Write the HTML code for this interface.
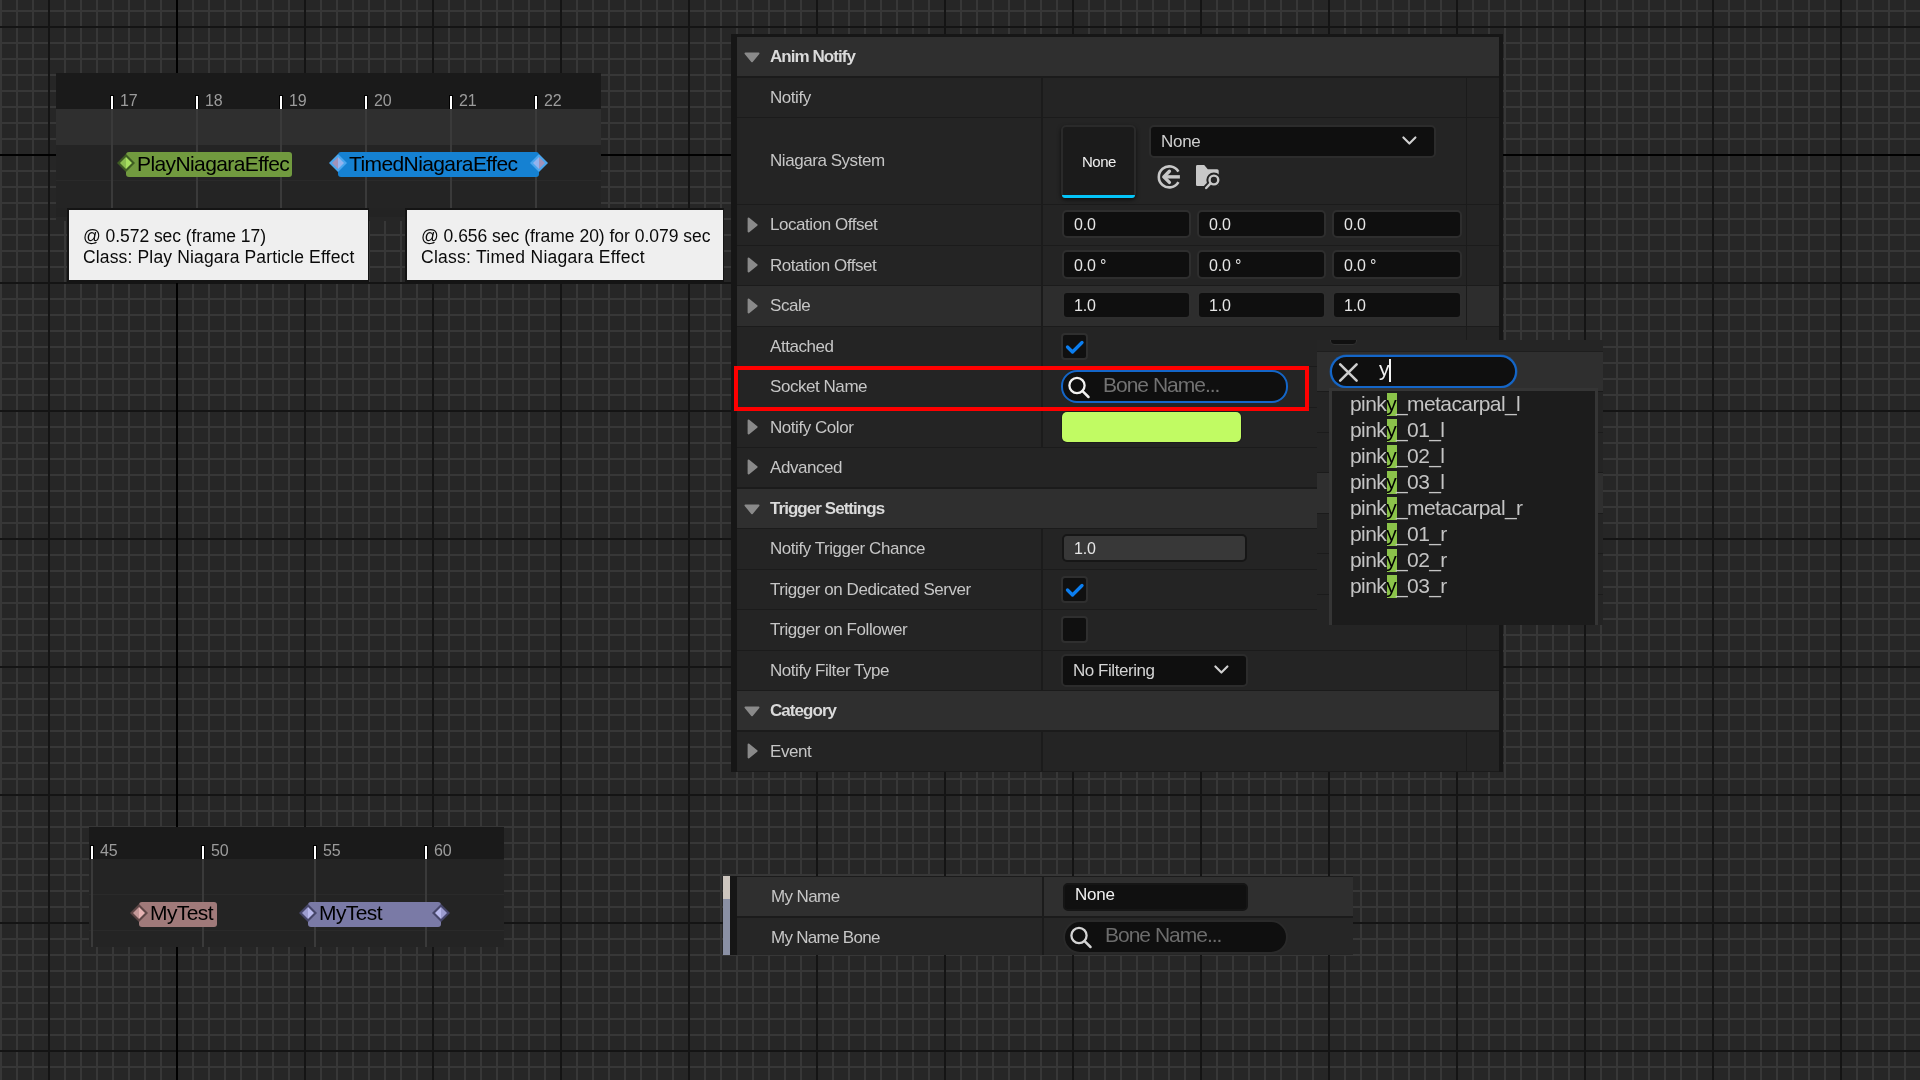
<!DOCTYPE html>
<html><head><meta charset="utf-8"><style>
html,body{margin:0;padding:0;width:1920px;height:1080px;overflow:hidden}
body{position:relative;font-family:"Liberation Sans", sans-serif;background-color:#262626;background-image:linear-gradient(to right, transparent 176px, #000 176px, #000 178px, transparent 178px),linear-gradient(to bottom, transparent 154px, #000 154px, #000 156px, transparent 156px),repeating-linear-gradient(to right, transparent 0, transparent 48px, #141414 48px, #141414 50px, transparent 50px, transparent 128px),repeating-linear-gradient(to bottom, transparent 0, transparent 26px, #141414 26px, #141414 28px, transparent 28px, transparent 128px),repeating-linear-gradient(to right, #373737 0, #373737 2px, transparent 2px, transparent 16px),repeating-linear-gradient(to bottom, transparent 0, transparent 10px, #373737 10px, #373737 12px, transparent 12px, transparent 16px);}
.b{position:absolute;box-sizing:content-box}
.t{position:absolute;white-space:nowrap;will-change:transform}
</style></head><body>
<div class="b" style="left:56px;top:73px;width:545px;height:36px;background:#1a1a1a"></div>
<div class="b" style="left:56px;top:109px;width:545px;height:36px;background:#2f2f2f"></div>
<div class="b" style="left:56px;top:145px;width:545px;height:63px;background:#242424"></div>
<div class="b" style="left:56px;top:180px;width:545px;height:1px;background:#2a2a2a"></div>
<div class="b" style="left:56px;top:208px;width:349px;height:9px;background:#232323"></div>
<div class="b" style="left:56px;top:217px;width:349px;height:4px;background:#262626"></div>
<div class="b" style="left:111px;top:109px;width:2px;height:99px;background:#3a3a3a"></div>
<div class="b" style="left:110px;top:95px;width:4px;height:14px;background:#000"></div>
<div class="b" style="left:111px;top:96px;width:2px;height:13px;background:#fff"></div>
<div class="t" style="left:120px;top:93.46px;font-size:16px;line-height:16px;color:#9c9c9c;font-weight:normal;letter-spacing:-0.2px;">17</div>
<div class="b" style="left:196px;top:109px;width:2px;height:99px;background:#3a3a3a"></div>
<div class="b" style="left:195px;top:95px;width:4px;height:14px;background:#000"></div>
<div class="b" style="left:196px;top:96px;width:2px;height:13px;background:#fff"></div>
<div class="t" style="left:205px;top:93.46px;font-size:16px;line-height:16px;color:#9c9c9c;font-weight:normal;letter-spacing:-0.2px;">18</div>
<div class="b" style="left:280px;top:109px;width:2px;height:99px;background:#3a3a3a"></div>
<div class="b" style="left:279px;top:95px;width:4px;height:14px;background:#000"></div>
<div class="b" style="left:280px;top:96px;width:2px;height:13px;background:#fff"></div>
<div class="t" style="left:289px;top:93.46px;font-size:16px;line-height:16px;color:#9c9c9c;font-weight:normal;letter-spacing:-0.2px;">19</div>
<div class="b" style="left:365px;top:109px;width:2px;height:99px;background:#3a3a3a"></div>
<div class="b" style="left:364px;top:95px;width:4px;height:14px;background:#000"></div>
<div class="b" style="left:365px;top:96px;width:2px;height:13px;background:#fff"></div>
<div class="t" style="left:374px;top:93.46px;font-size:16px;line-height:16px;color:#9c9c9c;font-weight:normal;letter-spacing:-0.2px;">20</div>
<div class="b" style="left:450px;top:109px;width:2px;height:99px;background:#3a3a3a"></div>
<div class="b" style="left:449px;top:95px;width:4px;height:14px;background:#000"></div>
<div class="b" style="left:450px;top:96px;width:2px;height:13px;background:#fff"></div>
<div class="t" style="left:459px;top:93.46px;font-size:16px;line-height:16px;color:#9c9c9c;font-weight:normal;letter-spacing:-0.2px;">21</div>
<div class="b" style="left:535px;top:109px;width:2px;height:99px;background:#3a3a3a"></div>
<div class="b" style="left:534px;top:95px;width:4px;height:14px;background:#000"></div>
<div class="b" style="left:535px;top:96px;width:2px;height:13px;background:#fff"></div>
<div class="t" style="left:544px;top:93.46px;font-size:16px;line-height:16px;color:#9c9c9c;font-weight:normal;letter-spacing:-0.2px;">22</div>
<div class="b" style="left:126px;top:152px;width:166px;height:25px;background:#719a3f;border-radius:3px;overflow:hidden"><div class="t" style="left:10.5px;top:-1.5px;font-size:21px;line-height:25px;color:#000;letter-spacing:-0.6px">PlayNiagaraEffec</div></div>
<svg class="b" style="left:116px;top:153px" width="20" height="20" viewBox="-10 -10 20 20"><path d="M0,-9L9,0L0,9L-9,0Z" fill="#3e5c22"/><path d="M0,-6L0,6L-6,0Z" fill="#8bbd50"/><path d="M0,-6L6,0L0,6Z" fill="#a6df60"/></svg>
<div class="b" style="left:338px;top:152px;width:201px;height:25px;background:#1581d2;border-radius:3px;overflow:hidden"><div class="b" style="left:0;top:0;width:181px;height:25px;overflow:hidden"><div class="t" style="left:10.5px;top:-1.5px;font-size:21px;line-height:25px;color:#000;letter-spacing:-0.6px">TimedNiagaraEffec</div></div></div>
<svg class="b" style="left:328px;top:153px" width="20" height="20" viewBox="-10 -10 20 20"><path d="M0,-9L9,0L0,9L-9,0Z" fill="#4aa6ee"/><path d="M0,-6L0,6L-6,0Z" fill="#a093ba"/><path d="M0,-6L6,0L0,6Z" fill="#93b3ee"/></svg>
<svg class="b" style="left:529px;top:153px" width="20" height="20" viewBox="-10 -10 20 20"><path d="M0,-9L9,0L0,9L-9,0Z" fill="#4aa6ee"/><path d="M0,-6L0,6L-6,0Z" fill="#93b3ee"/><path d="M0,-6L6,0L0,6Z" fill="#a093ba"/></svg>
<div class="b" style="left:67px;top:208px;width:302px;height:75px;background:#141414"></div>
<div class="b" style="left:69px;top:210px;width:299px;height:70px;background:#efefef"></div>
<div class="t" style="left:83px;top:228.19px;font-size:17.5px;line-height:17.5px;color:#0a0a0a;font-weight:normal;letter-spacing:-0.05px;">@ 0.572 sec (frame 17)</div>
<div class="t" style="left:83px;top:249.19px;font-size:17.5px;line-height:17.5px;color:#0a0a0a;font-weight:normal;letter-spacing:0.15px;">Class: Play Niagara Particle Effect</div>
<div class="b" style="left:405px;top:208px;width:319px;height:75px;background:#141414"></div>
<div class="b" style="left:407px;top:210px;width:316px;height:70px;background:#efefef"></div>
<div class="t" style="left:421px;top:228.19px;font-size:17.5px;line-height:17.5px;color:#0a0a0a;font-weight:normal;letter-spacing:-0.02px;">@ 0.656 sec (frame 20) for 0.079 sec</div>
<div class="t" style="left:421px;top:249.19px;font-size:17.5px;line-height:17.5px;color:#0a0a0a;font-weight:normal;letter-spacing:0.27px;">Class: Timed Niagara Effect</div>
<div class="b" style="left:89px;top:827px;width:415px;height:32px;background:#1a1a1a"></div>
<div class="b" style="left:89px;top:859px;width:415px;height:88px;background:#242424"></div>
<div class="b" style="left:89px;top:894px;width:415px;height:1px;background:#2a2a2a"></div>
<div class="b" style="left:89px;top:930px;width:415px;height:1px;background:#2a2a2a"></div>
<div class="b" style="left:91px;top:859px;width:2px;height:88px;background:#3a3a3a"></div>
<div class="b" style="left:90px;top:845px;width:4px;height:14px;background:#000"></div>
<div class="b" style="left:91px;top:846px;width:2px;height:13px;background:#fff"></div>
<div class="t" style="left:100px;top:843.46px;font-size:16px;line-height:16px;color:#9c9c9c;font-weight:normal;letter-spacing:-0.2px;">45</div>
<div class="b" style="left:202px;top:859px;width:2px;height:88px;background:#3a3a3a"></div>
<div class="b" style="left:201px;top:845px;width:4px;height:14px;background:#000"></div>
<div class="b" style="left:202px;top:846px;width:2px;height:13px;background:#fff"></div>
<div class="t" style="left:211px;top:843.46px;font-size:16px;line-height:16px;color:#9c9c9c;font-weight:normal;letter-spacing:-0.2px;">50</div>
<div class="b" style="left:314px;top:859px;width:2px;height:88px;background:#3a3a3a"></div>
<div class="b" style="left:313px;top:845px;width:4px;height:14px;background:#000"></div>
<div class="b" style="left:314px;top:846px;width:2px;height:13px;background:#fff"></div>
<div class="t" style="left:323px;top:843.46px;font-size:16px;line-height:16px;color:#9c9c9c;font-weight:normal;letter-spacing:-0.2px;">55</div>
<div class="b" style="left:425px;top:859px;width:2px;height:88px;background:#3a3a3a"></div>
<div class="b" style="left:424px;top:845px;width:4px;height:14px;background:#000"></div>
<div class="b" style="left:425px;top:846px;width:2px;height:13px;background:#fff"></div>
<div class="t" style="left:434px;top:843.46px;font-size:16px;line-height:16px;color:#9c9c9c;font-weight:normal;letter-spacing:-0.2px;">60</div>
<div class="b" style="left:139px;top:902px;width:78px;height:25px;background:#a07a7a;border-radius:3px;overflow:hidden"><div class="t" style="left:10.5px;top:-2.5px;font-size:21px;line-height:25px;color:#000;letter-spacing:-0.6px">MyTest</div></div>
<svg class="b" style="left:129px;top:903px" width="20" height="20" viewBox="-10 -10 20 20"><path d="M0,-9L9,0L0,9L-9,0Z" fill="#5e4646"/><path d="M0,-6L0,6L-6,0Z" fill="#c49898"/><path d="M0,-6L6,0L0,6Z" fill="#e6b4b4"/></svg>
<div class="b" style="left:308px;top:902px;width:133px;height:25px;background:#7a7aa6;border-radius:3px;overflow:hidden"><div class="t" style="left:10.5px;top:-2.5px;font-size:21px;line-height:25px;color:#000;letter-spacing:-0.6px">MyTest</div></div>
<svg class="b" style="left:298px;top:903px" width="20" height="20" viewBox="-10 -10 20 20"><path d="M0,-9L9,0L0,9L-9,0Z" fill="#46466a"/><path d="M0,-6L0,6L-6,0Z" fill="#9c9cd0"/><path d="M0,-6L6,0L0,6Z" fill="#b8b8ec"/></svg>
<svg class="b" style="left:431px;top:903px" width="20" height="20" viewBox="-10 -10 20 20"><path d="M0,-9L9,0L0,9L-9,0Z" fill="#46466a"/><path d="M0,-6L0,6L-6,0Z" fill="#b8b8ec"/><path d="M0,-6L6,0L0,6Z" fill="#9c9cd0"/></svg>
<div class="b" style="left:731px;top:34px;width:772px;height:738px;background:#1b1b1b"></div>
<div class="b" style="left:731px;top:34px;width:6px;height:738px;background:#161616"></div>
<div class="b" style="left:1499px;top:34px;width:4px;height:738px;background:#161616"></div>
<div class="b" style="left:731px;top:34px;width:772px;height:3px;background:#161616"></div>
<div class="b" style="left:737px;top:37px;width:762px;height:39px;background:#2f2f2f"></div>
<svg class="b" style="left:744px;top:52px" width="16" height="11"><path d="M1.4,1.4L14.6,1.4L8,9.4Z" fill="#8a8a8a" stroke="#8a8a8a" stroke-width="1.8" stroke-linejoin="round"/></svg>
<div class="t" style="left:770px;top:47.61px;font-size:17px;line-height:17px;color:#dadada;font-weight:bold;letter-spacing:-0.95px;">Anim Notify</div>
<div class="b" style="left:737px;top:78px;width:304px;height:39px;background:#242424"></div>
<div class="b" style="left:1043px;top:78px;width:423px;height:39px;background:#242424"></div>
<div class="b" style="left:1467px;top:78px;width:32px;height:39px;background:#242424"></div>
<div class="t" style="left:770px;top:88.61px;font-size:17px;line-height:17px;color:#c6c6c6;font-weight:normal;letter-spacing:-0.45px;">Notify</div>
<div class="b" style="left:737px;top:118px;width:304px;height:86px;background:#242424"></div>
<div class="b" style="left:1043px;top:118px;width:423px;height:86px;background:#242424"></div>
<div class="b" style="left:1467px;top:118px;width:32px;height:86px;background:#242424"></div>
<div class="t" style="left:770px;top:152.11px;font-size:17px;line-height:17px;color:#c6c6c6;font-weight:normal;letter-spacing:-0.45px;">Niagara System</div>
<div class="b" style="left:737px;top:205px;width:304px;height:40px;background:#242424"></div>
<div class="b" style="left:1043px;top:205px;width:423px;height:40px;background:#242424"></div>
<div class="b" style="left:1467px;top:205px;width:32px;height:40px;background:#242424"></div>
<svg class="b" style="left:747px;top:217px" width="11" height="16"><path d="M1.6,1.6L9.6,8L1.6,14.4Z" fill="#8a8a8a" stroke="#8a8a8a" stroke-width="2" stroke-linejoin="round"/></svg>
<div class="t" style="left:770px;top:216.11px;font-size:17px;line-height:17px;color:#c6c6c6;font-weight:normal;letter-spacing:-0.45px;">Location Offset</div>
<div class="b" style="left:737px;top:246px;width:304px;height:39px;background:#242424"></div>
<div class="b" style="left:1043px;top:246px;width:423px;height:39px;background:#242424"></div>
<div class="b" style="left:1467px;top:246px;width:32px;height:39px;background:#242424"></div>
<svg class="b" style="left:747px;top:257px" width="11" height="16"><path d="M1.6,1.6L9.6,8L1.6,14.4Z" fill="#8a8a8a" stroke="#8a8a8a" stroke-width="2" stroke-linejoin="round"/></svg>
<div class="t" style="left:770px;top:256.61px;font-size:17px;line-height:17px;color:#c6c6c6;font-weight:normal;letter-spacing:-0.45px;">Rotation Offset</div>
<div class="b" style="left:737px;top:286px;width:304px;height:40px;background:#2d2d2d"></div>
<div class="b" style="left:1043px;top:286px;width:423px;height:40px;background:#2d2d2d"></div>
<div class="b" style="left:1467px;top:286px;width:32px;height:40px;background:#2d2d2d"></div>
<svg class="b" style="left:747px;top:298px" width="11" height="16"><path d="M1.6,1.6L9.6,8L1.6,14.4Z" fill="#8a8a8a" stroke="#8a8a8a" stroke-width="2" stroke-linejoin="round"/></svg>
<div class="t" style="left:770px;top:297.11px;font-size:17px;line-height:17px;color:#c6c6c6;font-weight:normal;letter-spacing:-0.45px;">Scale</div>
<div class="b" style="left:737px;top:327px;width:304px;height:39px;background:#242424"></div>
<div class="b" style="left:1043px;top:327px;width:423px;height:39px;background:#242424"></div>
<div class="b" style="left:1467px;top:327px;width:32px;height:39px;background:#242424"></div>
<div class="t" style="left:770px;top:337.61px;font-size:17px;line-height:17px;color:#c6c6c6;font-weight:normal;letter-spacing:-0.45px;">Attached</div>
<div class="b" style="left:737px;top:367px;width:304px;height:40px;background:#242424"></div>
<div class="b" style="left:1043px;top:367px;width:423px;height:40px;background:#242424"></div>
<div class="b" style="left:1467px;top:367px;width:32px;height:40px;background:#242424"></div>
<div class="t" style="left:770px;top:378.11px;font-size:17px;line-height:17px;color:#c6c6c6;font-weight:normal;letter-spacing:-0.45px;">Socket Name</div>
<div class="b" style="left:737px;top:408px;width:304px;height:39px;background:#242424"></div>
<div class="b" style="left:1043px;top:408px;width:423px;height:39px;background:#242424"></div>
<div class="b" style="left:1467px;top:408px;width:32px;height:39px;background:#242424"></div>
<svg class="b" style="left:747px;top:419px" width="11" height="16"><path d="M1.6,1.6L9.6,8L1.6,14.4Z" fill="#8a8a8a" stroke="#8a8a8a" stroke-width="2" stroke-linejoin="round"/></svg>
<div class="t" style="left:770px;top:418.61px;font-size:17px;line-height:17px;color:#c6c6c6;font-weight:normal;letter-spacing:-0.45px;">Notify Color</div>
<div class="b" style="left:737px;top:448px;width:762px;height:39px;background:#242424"></div>
<svg class="b" style="left:747px;top:459px" width="11" height="16"><path d="M1.6,1.6L9.6,8L1.6,14.4Z" fill="#8a8a8a" stroke="#8a8a8a" stroke-width="2" stroke-linejoin="round"/></svg>
<div class="t" style="left:770px;top:458.61px;font-size:17px;line-height:17px;color:#c6c6c6;font-weight:normal;letter-spacing:-0.45px;">Advanced</div>
<div class="b" style="left:737px;top:489px;width:762px;height:39px;background:#2f2f2f"></div>
<svg class="b" style="left:744px;top:504px" width="16" height="11"><path d="M1.4,1.4L14.6,1.4L8,9.4Z" fill="#8a8a8a" stroke="#8a8a8a" stroke-width="1.8" stroke-linejoin="round"/></svg>
<div class="t" style="left:770px;top:499.61px;font-size:17px;line-height:17px;color:#dadada;font-weight:bold;letter-spacing:-0.95px;">Trigger Settings</div>
<div class="b" style="left:737px;top:529px;width:304px;height:40px;background:#242424"></div>
<div class="b" style="left:1043px;top:529px;width:423px;height:40px;background:#242424"></div>
<div class="b" style="left:1467px;top:529px;width:32px;height:40px;background:#242424"></div>
<div class="t" style="left:770px;top:540.11px;font-size:17px;line-height:17px;color:#c6c6c6;font-weight:normal;letter-spacing:-0.45px;">Notify Trigger Chance</div>
<div class="b" style="left:737px;top:570px;width:304px;height:39px;background:#242424"></div>
<div class="b" style="left:1043px;top:570px;width:423px;height:39px;background:#242424"></div>
<div class="b" style="left:1467px;top:570px;width:32px;height:39px;background:#242424"></div>
<div class="t" style="left:770px;top:580.61px;font-size:17px;line-height:17px;color:#c6c6c6;font-weight:normal;letter-spacing:-0.45px;">Trigger on Dedicated Server</div>
<div class="b" style="left:737px;top:610px;width:304px;height:40px;background:#242424"></div>
<div class="b" style="left:1043px;top:610px;width:423px;height:40px;background:#242424"></div>
<div class="b" style="left:1467px;top:610px;width:32px;height:40px;background:#242424"></div>
<div class="t" style="left:770px;top:621.11px;font-size:17px;line-height:17px;color:#c6c6c6;font-weight:normal;letter-spacing:-0.45px;">Trigger on Follower</div>
<div class="b" style="left:737px;top:651px;width:304px;height:39px;background:#242424"></div>
<div class="b" style="left:1043px;top:651px;width:423px;height:39px;background:#242424"></div>
<div class="b" style="left:1467px;top:651px;width:32px;height:39px;background:#242424"></div>
<div class="t" style="left:770px;top:661.61px;font-size:17px;line-height:17px;color:#c6c6c6;font-weight:normal;letter-spacing:-0.45px;">Notify Filter Type</div>
<div class="b" style="left:737px;top:691px;width:762px;height:39px;background:#2f2f2f"></div>
<svg class="b" style="left:744px;top:706px" width="16" height="11"><path d="M1.4,1.4L14.6,1.4L8,9.4Z" fill="#8a8a8a" stroke="#8a8a8a" stroke-width="1.8" stroke-linejoin="round"/></svg>
<div class="t" style="left:770px;top:701.61px;font-size:17px;line-height:17px;color:#dadada;font-weight:bold;letter-spacing:-0.95px;">Category</div>
<div class="b" style="left:737px;top:732px;width:304px;height:39px;background:#242424"></div>
<div class="b" style="left:1043px;top:732px;width:423px;height:39px;background:#242424"></div>
<div class="b" style="left:1467px;top:732px;width:32px;height:39px;background:#242424"></div>
<svg class="b" style="left:747px;top:743px" width="11" height="16"><path d="M1.6,1.6L9.6,8L1.6,14.4Z" fill="#8a8a8a" stroke="#8a8a8a" stroke-width="2" stroke-linejoin="round"/></svg>
<div class="t" style="left:770px;top:742.61px;font-size:17px;line-height:17px;color:#c6c6c6;font-weight:normal;letter-spacing:-0.45px;">Event</div>
<div class="b" style="left:1061px;top:125px;width:71px;height:69px;background:#1b1b1b;border:2px solid #2a2a2a;border-radius:5px;box-shadow:0 2px 4px rgba(0,0,0,0.6)"></div>
<div class="b" style="left:1062px;top:195px;width:73px;height:3px;background:#04c4f8;border-radius:0 0 3px 3px"></div>
<div class="t" style="left:1082px;top:154.30px;font-size:15px;line-height:15px;color:#f0f0f0;font-weight:normal;letter-spacing:-0.5px;">None</div>
<div class="b" style="left:1149px;top:125px;width:283px;height:29px;background:#0f0f0f;border:2px solid #2c2c2c;border-radius:5px"></div>
<div class="t" style="left:1161px;top:132.61px;font-size:17px;line-height:17px;color:#cfcfcf;font-weight:normal;letter-spacing:-0.3px;">None</div>
<svg class="b" style="left:1402px;top:136px" width="16" height="10" viewBox="0 0 16 10"><path d="M1.4,1.4 L7.4,7.6 L13.4,1.4" fill="none" stroke="#d0d0d0" stroke-width="2.1" stroke-linecap="round" stroke-linejoin="round"/></svg>
<svg class="b" style="left:1155px;top:163px" width="28" height="28" viewBox="0 0 28 28"><path d="M23.4,8.65 A10.5,10.5 0 1 0 23.4,19.15" fill="none" stroke="#c8c8c8" stroke-width="2.6"/><path d="M8.8,13.85 L24.9,13.85" fill="none" stroke="#c8c8c8" stroke-width="3.4"/><path d="M14.4,8.3 L8.8,13.85 L14.4,19.4" fill="none" stroke="#c8c8c8" stroke-width="3.4" stroke-linejoin="round" stroke-linecap="round"/></svg>
<svg class="b" style="left:1194px;top:163px" width="30" height="28" viewBox="0 0 30 28"><path d="M2,3.4 Q2,2 3.4,2 L10.2,2 L13.8,6.3 L23.2,6.3 Q24.7,6.3 24.7,7.8 L24.7,23.1 L3.4,23.1 Q2,23.1 2,21.7 Z" fill="#c8c8c8"/><circle cx="19.9" cy="17" r="4.35" fill="#242424" stroke="#242424" stroke-width="6.4"/><path d="M15.4,21.5 L11.8,25.3" stroke="#242424" stroke-width="6"/><circle cx="19.9" cy="17" r="4.35" fill="none" stroke="#c8c8c8" stroke-width="2.4"/><path d="M16.3,20.6 L12.2,25" stroke="#c8c8c8" stroke-width="2.4" stroke-linecap="round"/></svg>
<div class="b" style="left:1062px;top:210px;width:125px;height:24px;background:#0f0f0f;border:2px solid #2e2e2e;border-radius:5px"></div>
<div class="t" style="left:1074px;top:217.26px;font-size:16px;line-height:16px;color:#e6e6e6;font-weight:normal;letter-spacing:-0.2px;">0.0</div>
<div class="b" style="left:1197px;top:210px;width:125px;height:24px;background:#0f0f0f;border:2px solid #2e2e2e;border-radius:5px"></div>
<div class="t" style="left:1209px;top:217.26px;font-size:16px;line-height:16px;color:#e6e6e6;font-weight:normal;letter-spacing:-0.2px;">0.0</div>
<div class="b" style="left:1332px;top:210px;width:126px;height:24px;background:#0f0f0f;border:2px solid #2e2e2e;border-radius:5px"></div>
<div class="t" style="left:1344px;top:217.26px;font-size:16px;line-height:16px;color:#e6e6e6;font-weight:normal;letter-spacing:-0.2px;">0.0</div>
<div class="b" style="left:1062px;top:250px;width:125px;height:25px;background:#0f0f0f;border:2px solid #2e2e2e;border-radius:5px"></div>
<div class="t" style="left:1074px;top:257.76px;font-size:16px;line-height:16px;color:#e6e6e6;font-weight:normal;letter-spacing:-0.2px;">0.0 °</div>
<div class="b" style="left:1197px;top:250px;width:125px;height:25px;background:#0f0f0f;border:2px solid #2e2e2e;border-radius:5px"></div>
<div class="t" style="left:1209px;top:257.76px;font-size:16px;line-height:16px;color:#e6e6e6;font-weight:normal;letter-spacing:-0.2px;">0.0 °</div>
<div class="b" style="left:1332px;top:250px;width:126px;height:25px;background:#0f0f0f;border:2px solid #2e2e2e;border-radius:5px"></div>
<div class="t" style="left:1344px;top:257.76px;font-size:16px;line-height:16px;color:#e6e6e6;font-weight:normal;letter-spacing:-0.2px;">0.0 °</div>
<div class="b" style="left:1062px;top:291px;width:125px;height:24px;background:#0f0f0f;border:2px solid #2e2e2e;border-radius:5px"></div>
<div class="t" style="left:1074px;top:298.26px;font-size:16px;line-height:16px;color:#e6e6e6;font-weight:normal;letter-spacing:-0.2px;">1.0</div>
<div class="b" style="left:1197px;top:291px;width:125px;height:24px;background:#0f0f0f;border:2px solid #2e2e2e;border-radius:5px"></div>
<div class="t" style="left:1209px;top:298.26px;font-size:16px;line-height:16px;color:#e6e6e6;font-weight:normal;letter-spacing:-0.2px;">1.0</div>
<div class="b" style="left:1332px;top:291px;width:126px;height:24px;background:#0f0f0f;border:2px solid #2e2e2e;border-radius:5px"></div>
<div class="t" style="left:1344px;top:298.26px;font-size:16px;line-height:16px;color:#e6e6e6;font-weight:normal;letter-spacing:-0.2px;">1.0</div>
<div class="b" style="left:1061px;top:333px;width:23px;height:23px;background:#101010;border:2px solid #2f2f2f;border-radius:4px"></div>
<svg class="b" style="left:1062px;top:334px" width="25" height="25" viewBox="0 0 25 25"><path d="M5.5,13 L10.5,18 L20,8.5" fill="none" stroke="#0b7ef0" stroke-width="3.3" stroke-linecap="round" stroke-linejoin="round"/></svg>
<div class="b" style="left:1317px;top:340px;width:286px;height:12px;background:#252525;overflow:hidden"><div class="b" style="left:13px;top:-21px;width:25px;height:24px;background:#101010;border:1px solid #313131;border-radius:4px"></div></div>
<div class="b" style="left:1061px;top:370px;width:223px;height:29px;background:#0f0f0f;border:2px solid #1466c8;border-radius:16px"></div>
<svg class="b" style="left:1066px;top:373.5px" width="28" height="28" viewBox="0 0 28 28"><circle cx="11" cy="11.5" r="7.6" fill="none" stroke="#f2f2f2" stroke-width="2.3"/><path d="M16.6,17.2 L22.5,23" stroke="#f2f2f2" stroke-width="2.5" stroke-linecap="round"/></svg>
<div class="t" style="left:1103px;top:373.92px;font-size:21px;line-height:21px;color:#727272;font-weight:normal;letter-spacing:-1.0px;">Bone Name...</div>
<div class="b" style="left:1062px;top:412px;width:179px;height:30px;background:#c1fb63;border-radius:5px;box-shadow:0 0 0 1px #1c1c1c"></div>
<div class="b" style="left:1062px;top:534px;width:181px;height:24px;background:#383838;border:2px solid #161616;border-radius:5px"></div>
<div class="t" style="left:1074px;top:540.76px;font-size:16px;line-height:16px;color:#e6e6e6;font-weight:normal;letter-spacing:-0.2px;">1.0</div>
<div class="b" style="left:1061px;top:576px;width:23px;height:23px;background:#101010;border:2px solid #2f2f2f;border-radius:4px"></div>
<svg class="b" style="left:1062px;top:577px" width="25" height="25" viewBox="0 0 25 25"><path d="M5.5,13 L10.5,18 L20,8.5" fill="none" stroke="#0b7ef0" stroke-width="3.3" stroke-linecap="round" stroke-linejoin="round"/></svg>
<div class="b" style="left:1061px;top:616px;width:23px;height:23px;background:#101010;border:2px solid #2f2f2f;border-radius:4px"></div>
<div class="b" style="left:1061px;top:654px;width:183px;height:29px;background:#0f0f0f;border:2px solid #2c2c2c;border-radius:5px"></div>
<div class="t" style="left:1073px;top:661.61px;font-size:17px;line-height:17px;color:#d4d4d4;font-weight:normal;letter-spacing:-0.45px;">No Filtering</div>
<svg class="b" style="left:1214px;top:665px" width="16" height="10" viewBox="0 0 16 10"><path d="M1.4,1.4 L7.4,7.6 L13.4,1.4" fill="none" stroke="#d0d0d0" stroke-width="2.1" stroke-linecap="round" stroke-linejoin="round"/></svg>
<div class="b" style="left:734px;top:366px;width:567px;height:37px;border:4px solid #ff0000"></div>
<div class="b" style="left:1317px;top:351px;width:286px;height:1px;background:#1e1e1e"></div>
<div class="b" style="left:1317px;top:352px;width:286px;height:39px;background:#2f2f2f"></div>
<div class="b" style="left:1330px;top:355px;width:183px;height:29px;background:#0f0f0f;border:2px solid #1466c8;border-radius:17px;box-shadow:0 0 0 0.5px rgba(20,102,200,0.6)"></div>
<svg class="b" style="left:1336px;top:361px" width="24" height="24" viewBox="0 0 24 24"><path d="M4.2,3.3 L20.6,19.7 M20.6,3.3 L4.2,19.7" stroke="#cdcdcd" stroke-width="2.6" stroke-linecap="round"/></svg>
<div class="t" style="left:1379px;top:358.22px;font-size:21px;line-height:21px;color:#f0f0f0;font-weight:normal;letter-spacing:0px;">y</div>
<div class="b" style="left:1389px;top:359px;width:2px;height:23px;background:#f4f4f4"></div>
<div class="b" style="left:1317px;top:391px;width:12px;height:234px;background:#242424"></div>
<div class="b" style="left:1317px;top:473px;width:12px;height:40px;background:#2f2f2f"></div>
<div class="b" style="left:1317px;top:391px;width:12px;height:1px;background:#1b1b1b"></div>
<div class="b" style="left:1317px;top:432px;width:12px;height:1px;background:#1b1b1b"></div>
<div class="b" style="left:1317px;top:472px;width:12px;height:1px;background:#1b1b1b"></div>
<div class="b" style="left:1317px;top:513px;width:12px;height:1px;background:#1b1b1b"></div>
<div class="b" style="left:1317px;top:553px;width:12px;height:1px;background:#1b1b1b"></div>
<div class="b" style="left:1317px;top:594px;width:12px;height:1px;background:#1b1b1b"></div>
<div class="b" style="left:1598px;top:391px;width:5px;height:234px;background:#242424"></div>
<div class="b" style="left:1598px;top:473px;width:5px;height:40px;background:#2f2f2f"></div>
<div class="b" style="left:1598px;top:391px;width:5px;height:1px;background:#1b1b1b"></div>
<div class="b" style="left:1598px;top:432px;width:5px;height:1px;background:#1b1b1b"></div>
<div class="b" style="left:1598px;top:472px;width:5px;height:1px;background:#1b1b1b"></div>
<div class="b" style="left:1598px;top:513px;width:5px;height:1px;background:#1b1b1b"></div>
<div class="b" style="left:1598px;top:553px;width:5px;height:1px;background:#1b1b1b"></div>
<div class="b" style="left:1598px;top:594px;width:5px;height:1px;background:#1b1b1b"></div>
<div class="b" style="left:1329px;top:388px;width:269px;height:237px;background:#353535"></div>
<div class="b" style="left:1332px;top:391px;width:263px;height:234px;background:#1c1c1c"></div>
<div class="b" style="left:1387px;top:393px;width:10px;height:23px;background:#8bc34a"></div>
<div class="t" style="left:1350px;top:392.82px;font-size:21px;line-height:21px;color:#c4c4c4;letter-spacing:-0.6px">pink<span style="color:#000">y</span>_metacarpal_l</div>
<div class="b" style="left:1387px;top:419px;width:10px;height:23px;background:#8bc34a"></div>
<div class="t" style="left:1350px;top:418.82px;font-size:21px;line-height:21px;color:#c4c4c4;letter-spacing:-0.6px">pink<span style="color:#000">y</span>_01_l</div>
<div class="b" style="left:1387px;top:445px;width:10px;height:23px;background:#8bc34a"></div>
<div class="t" style="left:1350px;top:444.82px;font-size:21px;line-height:21px;color:#c4c4c4;letter-spacing:-0.6px">pink<span style="color:#000">y</span>_02_l</div>
<div class="b" style="left:1387px;top:471px;width:10px;height:23px;background:#8bc34a"></div>
<div class="t" style="left:1350px;top:470.82px;font-size:21px;line-height:21px;color:#c4c4c4;letter-spacing:-0.6px">pink<span style="color:#000">y</span>_03_l</div>
<div class="b" style="left:1387px;top:497px;width:10px;height:23px;background:#8bc34a"></div>
<div class="t" style="left:1350px;top:496.82px;font-size:21px;line-height:21px;color:#c4c4c4;letter-spacing:-0.6px">pink<span style="color:#000">y</span>_metacarpal_r</div>
<div class="b" style="left:1387px;top:523px;width:10px;height:23px;background:#8bc34a"></div>
<div class="t" style="left:1350px;top:522.82px;font-size:21px;line-height:21px;color:#c4c4c4;letter-spacing:-0.6px">pink<span style="color:#000">y</span>_01_r</div>
<div class="b" style="left:1387px;top:549px;width:10px;height:23px;background:#8bc34a"></div>
<div class="t" style="left:1350px;top:548.82px;font-size:21px;line-height:21px;color:#c4c4c4;letter-spacing:-0.6px">pink<span style="color:#000">y</span>_02_r</div>
<div class="b" style="left:1387px;top:575px;width:10px;height:23px;background:#8bc34a"></div>
<div class="t" style="left:1350px;top:574.82px;font-size:21px;line-height:21px;color:#c4c4c4;letter-spacing:-0.6px">pink<span style="color:#000">y</span>_03_r</div>
<div class="b" style="left:723px;top:876px;width:7px;height:23px;background:#cdc6bf"></div>
<div class="b" style="left:723px;top:899px;width:7px;height:56px;background:#8a90a4"></div>
<div class="b" style="left:730px;top:876px;width:623px;height:79px;background:#1b1b1b"></div>
<div class="b" style="left:730px;top:876px;width:7px;height:79px;background:#161616"></div>
<div class="b" style="left:737px;top:877px;width:305px;height:39px;background:#2f2f2f"></div>
<div class="b" style="left:1044px;top:877px;width:309px;height:39px;background:#2f2f2f"></div>
<div class="b" style="left:737px;top:918px;width:305px;height:37px;background:#262626"></div>
<div class="b" style="left:1044px;top:918px;width:309px;height:37px;background:#262626"></div>
<div class="t" style="left:771px;top:887.61px;font-size:17px;line-height:17px;color:#c6c6c6;font-weight:normal;letter-spacing:-0.6px;">My Name</div>
<div class="t" style="left:771px;top:928.61px;font-size:17px;line-height:17px;color:#c6c6c6;font-weight:normal;letter-spacing:-0.7px;">My Name Bone</div>
<div class="b" style="left:1063px;top:883px;width:181px;height:24px;background:#101010;border:2px solid #151515;border-radius:5px"></div>
<div class="t" style="left:1075px;top:885.91px;font-size:17px;line-height:17px;color:#f0f0f0;font-weight:normal;letter-spacing:-0.2px;">None</div>
<div class="b" style="left:1063px;top:920px;width:221px;height:30px;background:#0f0f0f;border:2px solid #2a2a2a;border-radius:17px"></div>
<svg class="b" style="left:1068px;top:924.0px" width="28" height="28" viewBox="0 0 28 28"><circle cx="11" cy="11.5" r="7.6" fill="none" stroke="#d4d4d4" stroke-width="2.3"/><path d="M16.6,17.2 L22.5,23" stroke="#d4d4d4" stroke-width="2.5" stroke-linecap="round"/></svg>
<div class="t" style="left:1105px;top:924.42px;font-size:21px;line-height:21px;color:#6c6c6c;font-weight:normal;letter-spacing:-1.0px;">Bone Name...</div>
</body></html>
